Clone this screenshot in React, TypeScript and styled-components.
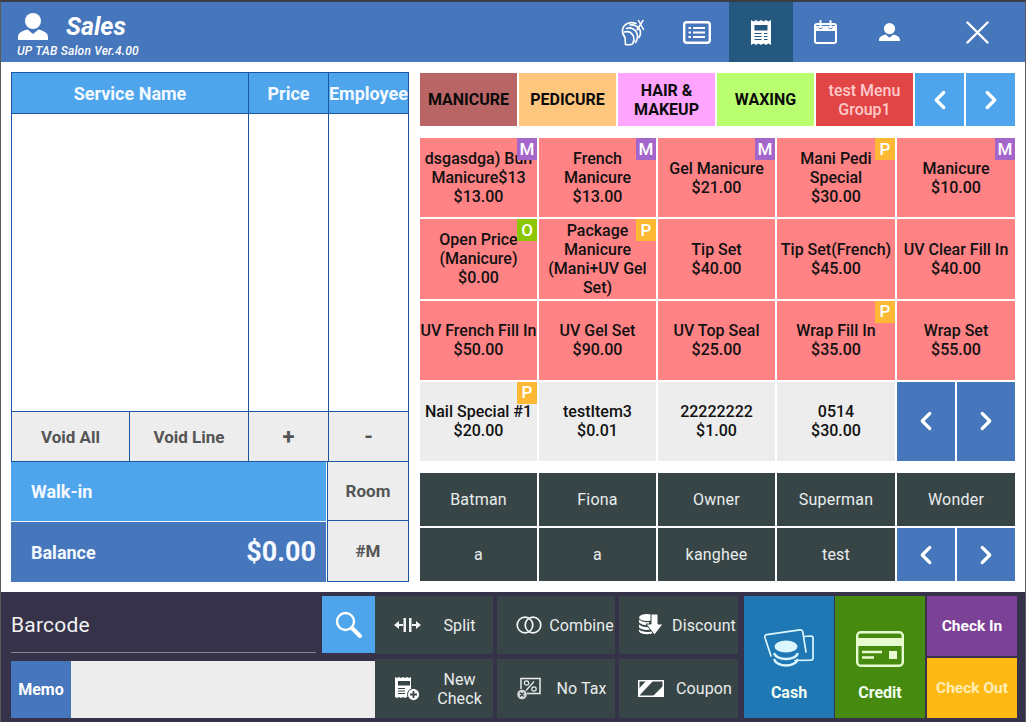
import React from "react";
import styled, { createGlobalStyle } from "styled-components";
import { ChevronLeft, ChevronRight } from "lucide-react";

const GlobalStyle = createGlobalStyle`
  html, body {
    margin: 0;
    padding: 0;
    background: #fff;
    font-family: Roboto, "Liberation Sans", sans-serif;
  }
  * {
    box-sizing: border-box;
  }
`;

const colors = {
  header: "#4676bc",
  sky: "#4fa5ec",
  line: "#1c55a0",
  gray: "#ededed",
  slate: "#384547",
  ink: "#35324a",
};

const Page = styled.div`
  width: 1026px;
  height: 722px;
  display: flex;
  flex-direction: column;
  overflow: hidden;
  background: #fff;
  border-top: 2px solid #3c3c44;
  border-left: 1px solid #5a5a5a;
  border-right: 1px solid #5a5a5a;
`;

const Header = styled.header`
  height: 60px;
  display: flex;
  justify-content: space-between;
  background: ${colors.header};
  color: #fff;
`;

const Identity = styled.div`
  padding: 11px 0 0 16px;
`;

const TitleRow = styled.div`
  display: flex;
  align-items: center;
  gap: 18px;
  height: 26px;
  padding-left: 1px;
`;

const Title = styled.h1`
  margin: 0;
  font-size: 25px;
  font-weight: 700;
  font-style: italic;
`;

const Version = styled.div`
  margin-top: 5px;
  font-size: 12px;
  font-weight: 500;
  font-style: italic;
  letter-spacing: 0.2px;
`;

const TopNav = styled.nav`
  display: flex;
  padding-right: 16px;
`;

const TopNavItem = styled.div<{ $active?: boolean; $close?: boolean }>`
  width: 64px;
  display: flex;
  align-items: center;
  justify-content: center;
  background: ${({ $active }) => ($active ? "#25587f" : "transparent")};
  margin-left: ${({ $close }) => ($close ? "24px" : "0")};
`;

const Main = styled.main`
  height: 530px;
  display: flex;
  gap: 11px;
  padding: 10px 0 0 10px;
`;

const LeftPanel = styled.section`
  width: 398px;
`;

const TicketTable = styled.div`
  display: grid;
  grid-template-columns: 118px 119px 80px 80px;
  grid-template-rows: 41px 298px 50px;
  border-top: 1px solid ${colors.line};
  border-left: 1px solid ${colors.line};
`;

const TableCell = styled.div<{ $span?: number }>`
  grid-column: span ${({ $span }) => $span ?? 1};
  border-right: 1px solid ${colors.line};
  border-bottom: 1px solid ${colors.line};
`;

const HeadCell = styled(TableCell)`
  display: flex;
  align-items: center;
  justify-content: center;
  background: ${colors.sky};
  color: #f4f9ff;
  font-size: 18px;
  font-weight: 700;
  white-space: nowrap;
`;

const ActionCell = styled(TableCell)<{ $symbol?: boolean }>`
  display: flex;
  align-items: center;
  justify-content: center;
  background: ${colors.gray};
  color: #555;
  font-size: ${({ $symbol }) => ($symbol ? "22px" : "17px")};
  font-weight: 700;
`;

const CustomerGrid = styled.div`
  display: grid;
  grid-template-columns: 315px 83px;
  grid-template-rows: 59px 61px;
`;

const CustomerBar = styled.div<{ $tone: string; $topLine?: boolean }>`
  display: flex;
  align-items: center;
  justify-content: space-between;
  padding: 0 10px 0 20px;
  background: ${({ $tone }) => $tone};
  border-top: ${({ $topLine }) => ($topLine ? "1px solid #fff" : "none")};
  color: #f4f9ff;
  font-size: 18px;
  font-weight: 700;
`;

const BalanceAmount = styled.span`
  font-size: 27px;
  font-weight: 700;
`;

const SideButton = styled.div`
  display: flex;
  align-items: center;
  justify-content: center;
  margin-left: 1px;
  background: ${colors.gray};
  border-right: 1px solid ${colors.line};
  border-bottom: 1px solid ${colors.line};
  border-left: 1px solid ${colors.line};
  color: #555;
  font-size: 17px;
  font-weight: 700;
`;

const RightPanel = styled.section`
  width: 595px;
  padding-top: 1px;
`;

const TabBar = styled.div`
  display: grid;
  grid-template-columns: repeat(5, 97px) 49px 49px;
  grid-template-rows: 53px;
  gap: 2px;
`;

const Tab = styled.div<{ $bg: string; $fg?: string }>`
  display: flex;
  align-items: center;
  justify-content: center;
  padding: 0 4px;
  background: ${({ $bg }) => $bg};
  color: ${({ $fg }) => $fg ?? "#0a0a0a"};
  font-size: 16px;
  font-weight: ${({ $fg }) => ($fg ? 500 : 700)};
  line-height: 19px;
  text-align: center;
`;

const PagerButton = styled.div<{ $tone: string }>`
  display: flex;
  align-items: center;
  justify-content: center;
  background: ${({ $tone }) => $tone};
  color: #fff;
`;

const PagerPair = styled.div`
  display: grid;
  grid-template-columns: 1fr 1fr;
  gap: 2px;
`;

const MenuGrid = styled.div`
  display: grid;
  grid-template-columns: 117px 117px 117px 118px 118px;
  grid-auto-rows: 79.25px;
  gap: 2px;
  margin-top: 12px;
`;

const MenuItem = styled.div<{ $plain?: boolean }>`
  position: relative;
  display: flex;
  align-items: center;
  justify-content: center;
  overflow: hidden;
  background: ${({ $plain }) => ($plain ? colors.gray : "#ff8285")};
  color: #111;
  font-size: 16px;
  font-weight: 500;
  line-height: 19px;
  text-align: center;
`;

const MenuLabel = styled.div`
  white-space: pre;
`;

const Badge = styled.span<{ $tone: string }>`
  position: absolute;
  top: 0;
  right: 0;
  width: 20px;
  height: 22px;
  display: flex;
  align-items: center;
  justify-content: center;
  background: ${({ $tone }) => $tone};
  color: #fff;
  font-size: 17px;
  font-weight: 500;
`;

const EmployeeGrid = styled.div`
  display: grid;
  grid-template-columns: 117px 117px 117px 118px 118px;
  grid-auto-rows: 53px;
  gap: 2px;
  margin-top: 12px;
`;

const Employee = styled.div`
  display: flex;
  align-items: center;
  justify-content: center;
  background: ${colors.slate};
  color: #e9eded;
  font-size: 16px;
  letter-spacing: 0.2px;
`;

const Footer = styled.footer`
  height: 130px;
  display: flex;
  padding: 4px 0 0 10px;
  background: ${colors.ink};
`;

const ScanPanel = styled.div`
  width: 364px;
  display: flex;
  flex-direction: column;
  gap: 8px;
`;

const BarcodeRow = styled.div`
  height: 57px;
  display: flex;
  justify-content: space-between;
`;

const BarcodeField = styled.div`
  width: 305px;
  height: 57px;
  display: flex;
  align-items: center;
  padding-top: 1px;
  border-bottom: 1px solid #85858f;
  color: #f2f2f2;
  font-size: 21px;
  letter-spacing: 0.2px;
`;

const SearchButton = styled.div`
  width: 53px;
  display: flex;
  align-items: center;
  justify-content: center;
  background: ${colors.sky};
`;

const MemoRow = styled.div`
  height: 57px;
  display: flex;
  background: ${colors.gray};
`;

const MemoLabel = styled.div`
  width: 60px;
  display: flex;
  align-items: center;
  justify-content: center;
  background: ${colors.header};
  color: #fff;
  font-size: 16px;
  font-weight: 700;
`;

const ActionGrid = styled.div`
  width: 363px;
  height: 122px;
  display: grid;
  grid-template-columns: 118px 118px 119px;
  grid-template-rows: 58px 59px;
  gap: 5px 4px;
`;

const ActionButton = styled.div`
  display: flex;
  align-items: center;
  padding: 0 6px 0 7px;
  background: ${colors.slate};
  color: #e9eded;
  font-size: 16px;
  letter-spacing: 0.1px;
`;

const ActionIcon = styled.div`
  width: 50px;
  flex: none;
  display: flex;
  justify-content: center;
`;

const ActionLabel = styled.div`
  flex: 1;
  min-width: 0;
  display: flex;
  justify-content: center;
  line-height: 19px;
  text-align: center;
  white-space: pre;
`;

const PayGroup = styled.div`
  height: 122px;
  display: flex;
  gap: 1px;
  margin-left: 6px;
`;

const PayButton = styled.div<{ $tone: string }>`
  width: 90px;
  display: flex;
  flex-direction: column;
  align-items: center;
  justify-content: flex-end;
  gap: 16px;
  padding-bottom: 16px;
  background: ${({ $tone }) => $tone};
  color: #f2fff0;
  font-size: 16px;
  font-weight: 700;
`;

const CheckColumn = styled.div`
  width: 90px;
  margin-left: 1px;
  display: grid;
  grid-template-rows: 60px 60px;
  gap: 2px;
`;

const CheckButton = styled.div<{ $tone: string; $fg: string }>`
  display: flex;
  align-items: center;
  justify-content: center;
  background: ${({ $tone }) => $tone};
  color: ${({ $fg }) => $fg};
  font-size: 15.5px;
  font-weight: 700;
`;

const UserIcon = ({ size }: { size: number }) => (
  <svg width={size} height={size * 0.9} viewBox="0 0 30 27" fill="#fff">
    <circle cx="15" cy="8" r="8" />
    <path d="M0 27v-3c0-4 4-6 9.500-7.500L15 21l5.500-4.500C26 18 30 20 30 24v3z" />
  </svg>
);

const HairIcon = () => (
  <svg width="24" height="27" viewBox="0 0 24 27" fill="none" stroke="#fff" strokeWidth="1.600" strokeLinecap="round">
    <path d="M15 4.500C9 2 2.500 5 1.500 11c-.5 3.500 1 5.500 2.500 7.500l.5 7" />
    <path d="M4.500 25.500c3 .5 6 .5 7.500-1 .5-1.500.3-2.500 1-3" />
    <path d="M5.500 9.500c4-2 9 1 10.500 5 1 3 .5 6-1.500 9" />
    <path d="M3.500 13c4-1 7.500 1 9 4.500 .7 2 .5 3.500 0 5" />
    <path d="M9 6c4-.5 8 1.500 10 5 1 2.500 .5 5-1 7.500" />
    <path d="M16 11L22 1.500M22.500 10.500L17.500 1.500" strokeWidth="1.500" />
  </svg>
);

const ListIcon = () => (
  <svg width="28" height="23" viewBox="0 0 28 23" fill="none" stroke="#fff">
    <rect x="1.200" y="1.200" width="25.600" height="20.600" rx="2.500" strokeWidth="2.400" />
    <path d="M10 7h12M10 11.500h12M10 16h12" strokeWidth="2.200" />
    <path d="M5.500 7h2.500M5.500 11.500h2.500M5.500 16h2.500" strokeWidth="2.200" />
  </svg>
);

const ReceiptIcon = () => (
  <svg width="20" height="25" viewBox="0 0 20 25">
    <path fill="#fff" d="M0 0l2.500 1.500L5 0l2.500 1.500L10 0l2.500 1.500L15 0l2.500 1.500L20 0v25l-2.500-1.500L15 25l-2.500-1.500L10 25l-2.500-1.500L5 25l-2.500-1.500L0 25z" />
    <rect x="3.500" y="5" width="13" height="5.500" fill="#25587f" />
    <path d="M3.500 13.500h7M3.500 16.500h7M3.500 19.500h7M13 13.500h3.500M13 16.500h3.500M13 19.500h3.500" stroke="#25587f" strokeWidth="1.200" />
  </svg>
);

const CalendarIcon = () => (
  <svg width="23" height="24" viewBox="0 0 23 24" fill="none" stroke="#fff">
    <rect x="1" y="4" width="21" height="19" rx="2" strokeWidth="2" />
    <path d="M1 6h21v5H1z" fill="#fff" stroke="none" />
    <path d="M6.500 1v6M16.500 1v6" strokeWidth="2" stroke="#fff" strokeLinecap="round" />
    <path d="M4.500 7.500c.5 1.500 3.500 1.500 4 0M14.500 7.500c.5 1.500 3.500 1.500 4 0" strokeWidth="1" stroke="#4676bc" />
  </svg>
);

const CloseIcon = () => (
  <svg width="23" height="23" viewBox="0 0 23 23" stroke="#fff" strokeWidth="2.400" strokeLinecap="round">
    <path d="M1.500 1.500l20 20M21.500 1.500l-20 20" />
  </svg>
);

const SearchIcon = () => (
  <svg width="27" height="27" viewBox="0 0 27 27" fill="none" stroke="#fff">
    <circle cx="10.500" cy="10.500" r="8.500" strokeWidth="2.400" />
    <path d="M17 17l8 8" strokeWidth="4" strokeLinecap="round" />
  </svg>
);

const SplitIcon = () => (
  <svg width="27" height="14" viewBox="0 0 27 14" fill="#f2f5f5">
    <rect x="9.500" y="0" width="2.500" height="14" />
    <rect x="15" y="0" width="2.500" height="14" />
    <path d="M0 7l5-4v3h4v2H5v3zM27 7l-5-4v3h-4v2h4v3z" />
  </svg>
);

const NewCheckIcon = () => (
  <svg width="25" height="24" viewBox="0 0 25 24">
    <path fill="#fff" d="M0 0l2 1 2-1 2 1 2-1 2 1 2-1 2 1 2-1v13l-3 6-1 1-2 1-2-1-2 1-2-1-2 1-2-1-2 1z" />
    <rect x="3" y="4" width="12" height="4.500" fill="#384547" />
    <path d="M3 11.500h7M3 14h7M3 16.500h7" stroke="#384547" strokeWidth="1.200" />
    <circle cx="18.500" cy="17.500" r="6" fill="#fff" stroke="#384547" strokeWidth="1" />
    <path d="M15 17.500h7M18.500 14v7" stroke="#384547" strokeWidth="1.800" />
  </svg>
);

const CombineIcon = () => (
  <svg width="26" height="18" viewBox="0 0 26 18" fill="none" stroke="#f2f5f5" strokeWidth="1.700">
    <circle cx="9" cy="9" r="7.800" />
    <circle cx="17" cy="9" r="7.800" />
  </svg>
);

const DiscountIcon = () => (
  <svg width="24" height="22" viewBox="0 0 24 22" fill="#fff">
    <ellipse cx="8" cy="3.500" rx="8" ry="3.500" />
    <path d="M0 5.500c2 2 6 3 10 2.500v3c-4 .5-8-.5-10-2.500zM0 10.500c2 2 7 3 10 2.500l2 2.500c-5 1-10 0-12-2zM0 15.500c2 2 8 3 13 2l1 1.500c-4 2-12 1.500-14-1.500z" />
    <path d="M12 0h7v10h5l-8.500 11L7 10h5z" stroke="#384547" strokeWidth="1" />
  </svg>
);

const NoTaxIcon = () => (
  <svg width="24" height="23" viewBox="0 0 24 23" fill="none" stroke="#e9eded">
    <path d="M4 12V1.500h19v15H10" strokeWidth="1.500" />
    <path d="M9 13.500l8-9" strokeWidth="1.200" />
    <circle cx="9.500" cy="6" r="2.200" strokeWidth="1.200" />
    <circle cx="17" cy="12" r="2.200" strokeWidth="1.200" />
    <circle cx="5" cy="17.500" r="4.800" fill="#d5d9d9" stroke="none" />
    <path d="M3 15.500l4 4M7 15.500l-4 4" stroke="#384547" strokeWidth="1.300" />
  </svg>
);

const CouponIcon = () => (
  <svg width="26" height="17" viewBox="0 0 26 17">
    <rect x="0.750" y="0.750" width="24.500" height="15.500" fill="none" stroke="#fff" strokeWidth="1.500" />
    <path fill="#fff" d="M1 16L15 1H8L1 8.500zM15 16L25 6v10z" />
  </svg>
);

const CashIcon = () => (
  <svg width="50" height="38" viewBox="0 0 50 38" fill="none" stroke="#dcf6ff" strokeWidth="1.700" strokeLinecap="round">
    <path d="M7 27L.9 8.500C.5 7 1.200 6 2.700 5.700L36 .9c1.500-.2 2.500.5 2.800 2L42 23" />
    <path d="M40 7.500l7-.5c1.300 0 2 .7 2 2v20c0 1.300-.7 2-2 2.100L31 31.500" />
    <ellipse cx="22" cy="17.500" rx="11.500" ry="6" fill="#dcf6ff" stroke="none" />
    <path d="M10.500 25c1 3 6 5 11.500 5s10.500-2 11.500-5M10.500 31c1 3 6 5.500 11.500 5.500S32.500 34 33.500 31" strokeWidth="2.400" />
  </svg>
);

const CreditIcon = () => (
  <svg width="48" height="36" viewBox="0 0 48 36" fill="none" stroke="#e6fbd0">
    <rect x="1.200" y="1.200" width="45.600" height="33.600" rx="3.500" strokeWidth="2.400" />
    <rect x="1" y="7" width="46" height="8" fill="#e6fbd0" stroke="none" />
    <path d="M6 21h20M6 26.500h12" strokeWidth="2.400" />
    <rect x="33" y="20" width="8" height="8" fill="#e6fbd0" stroke="none" />
  </svg>
);

const Pager = ({ tone, size = 30 }: { tone: string; size?: number }) => (
  <>
    <PagerButton $tone={tone}><ChevronLeft size={size} strokeWidth={2.600} /></PagerButton>
    <PagerButton $tone={tone}><ChevronRight size={size} strokeWidth={2.600} /></PagerButton>
  </>
);

const badgeTones: Record<string, string> = { M: "#a566cc", P: "#fdb933", O: "#8cc600" };

const tabs = [
  { text: "MANICURE", bg: "#b96565" },
  { text: "PEDICURE", bg: "#ffc77d" },
  { text: "HAIR &\nMAKEUP", bg: "#ffa4ff" },
  { text: "WAXING", bg: "#baff6f" },
  { text: "test Menu\nGroup1", bg: "#e14545", fg: "#ffcaca" },
];

const menuItems = [
  { text: "dsgasdga) Bun\nManicure$13\n$13.00", badge: "M" },
  { text: "French\nManicure\n$13.00", badge: "M" },
  { text: "Gel Manicure\n$21.00", badge: "M" },
  { text: "Mani Pedi\nSpecial\n$30.00", badge: "P" },
  { text: "Manicure\n$10.00", badge: "M" },
  { text: "Open Price\n(Manicure)\n$0.00", badge: "O" },
  { text: "Package\nManicure\n(Mani+UV Gel\nSet)", badge: "P" },
  { text: "Tip Set\n$40.00" },
  { text: "Tip Set(French)\n$45.00" },
  { text: "UV Clear Fill In\n$40.00" },
  { text: "UV French Fill In\n$50.00" },
  { text: "UV Gel Set\n$90.00" },
  { text: "UV Top Seal\n$25.00" },
  { text: "Wrap Fill In\n$35.00", badge: "P" },
  { text: "Wrap Set\n$55.00" },
  { text: "Nail Special #1\n$20.00", badge: "P", plain: true },
  { text: "testItem3\n$0.01", plain: true },
  { text: "22222222\n$1.00", plain: true },
  { text: "0514\n$30.00", plain: true },
];

const employees = ["Batman", "Fiona", "Owner", "Superman", "Wonder", "a", "a", "kanghee", "test"];

const actions = [
  { text: "Split", icon: <SplitIcon /> },
  { text: "Combine", icon: <CombineIcon /> },
  { text: "Discount", icon: <DiscountIcon /> },
  { text: "New\nCheck", icon: <NewCheckIcon /> },
  { text: "No Tax", icon: <NoTaxIcon /> },
  { text: "Coupon", icon: <CouponIcon /> },
];

export default function App() {
  return (
    <Page>
      <GlobalStyle />
      <Header>
        <Identity>
          <TitleRow>
            <UserIcon size={30} />
            <Title>Sales</Title>
          </TitleRow>
          <Version>UP TAB Salon Ver.4.00</Version>
        </Identity>
        <TopNav>
          <TopNavItem><HairIcon /></TopNavItem>
          <TopNavItem><ListIcon /></TopNavItem>
          <TopNavItem $active><ReceiptIcon /></TopNavItem>
          <TopNavItem><CalendarIcon /></TopNavItem>
          <TopNavItem><UserIcon size={21} /></TopNavItem>
          <TopNavItem $close><CloseIcon /></TopNavItem>
        </TopNav>
      </Header>

      <Main>
        <LeftPanel>
          <TicketTable>
            <HeadCell $span={2}>Service Name</HeadCell>
            <HeadCell>Price</HeadCell>
            <HeadCell>Employee</HeadCell>
            <TableCell $span={2} />
            <TableCell />
            <TableCell />
            <ActionCell>Void All</ActionCell>
            <ActionCell>Void Line</ActionCell>
            <ActionCell $symbol>+</ActionCell>
            <ActionCell $symbol>-</ActionCell>
          </TicketTable>
          <CustomerGrid>
            <CustomerBar $tone={colors.sky}>Walk-in</CustomerBar>
            <SideButton>Room</SideButton>
            <CustomerBar $tone={colors.header} $topLine>
              Balance
              <BalanceAmount>$0.00</BalanceAmount>
            </CustomerBar>
            <SideButton>#M</SideButton>
          </CustomerGrid>
        </LeftPanel>

        <RightPanel>
          <TabBar>
            {tabs.map((tab) => (
              <Tab key={tab.text} $bg={tab.bg} $fg={tab.fg}>
                <MenuLabel>{tab.text}</MenuLabel>
              </Tab>
            ))}
            <Pager tone={colors.sky} />
          </TabBar>

          <MenuGrid>
            {menuItems.map((item, index) => (
              <MenuItem key={index} $plain={item.plain}>
                <MenuLabel>{item.text}</MenuLabel>
                {item.badge && <Badge $tone={badgeTones[item.badge]}>{item.badge}</Badge>}
              </MenuItem>
            ))}
            <PagerPair><Pager tone={colors.header} /></PagerPair>
          </MenuGrid>

          <EmployeeGrid>
            {employees.map((name, index) => (
              <Employee key={index}>{name}</Employee>
            ))}
            <PagerPair><Pager tone={colors.header} /></PagerPair>
          </EmployeeGrid>
        </RightPanel>
      </Main>

      <Footer>
        <ScanPanel>
          <BarcodeRow>
            <BarcodeField>Barcode</BarcodeField>
            <SearchButton><SearchIcon /></SearchButton>
          </BarcodeRow>
          <MemoRow>
            <MemoLabel>Memo</MemoLabel>
          </MemoRow>
        </ScanPanel>

        <ActionGrid>
          {actions.map((action) => (
            <ActionButton key={action.text}>
              <ActionIcon>{action.icon}</ActionIcon>
              <ActionLabel>{action.text}</ActionLabel>
            </ActionButton>
          ))}
        </ActionGrid>

        <PayGroup>
          <PayButton $tone="#1f77b4"><CashIcon />Cash</PayButton>
          <PayButton $tone="#478a10"><CreditIcon />Credit</PayButton>
          <CheckColumn>
            <CheckButton $tone="#7b4196" $fg="#fff">Check In</CheckButton>
            <CheckButton $tone="#ffb914" $fg="#ffeeb8">Check Out</CheckButton>
          </CheckColumn>
        </PayGroup>
      </Footer>
    </Page>
  );
}
